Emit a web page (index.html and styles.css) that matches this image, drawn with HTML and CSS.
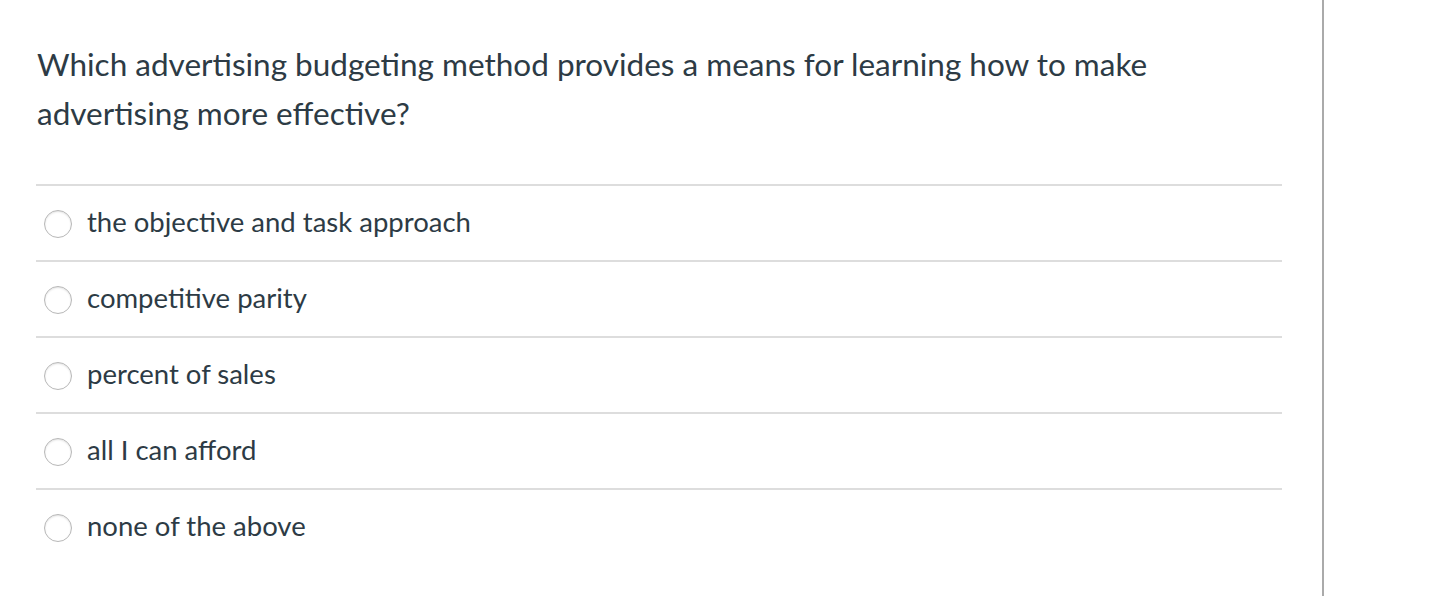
FILE: index.html
```html
<!DOCTYPE html>
<html>
<head>
<meta charset="utf-8">
<link rel="stylesheet" href="styles.css">
</head>
<body>
<div class="page">
  <div class="content">
    <div class="question">Which advertising budgeting method provides a means for learning how to make advertising more effective?</div>
    <div class="answers">
      <div class="answer"><span class="radio"></span><span class="label">the objective and task approach</span></div>
      <div class="answer"><span class="radio"></span><span class="label">competitive parity</span></div>
      <div class="answer"><span class="radio"></span><span class="label">percent of sales</span></div>
      <div class="answer"><span class="radio"></span><span class="label">all I can afford</span></div>
      <div class="answer"><span class="radio"></span><span class="label">none of the above</span></div>
    </div>
  </div>
  <div class="rule"></div>
</div>
</body>
</html>
```
FILE: styles.css
```css
html, body { margin: 0; padding: 0; background: #fff; }
body { font-family: Lato, "Open Sans", sans-serif; color: #2d3b45; }
.page { display: flex; width: 1448px; height: 596px; overflow: hidden; }
.content { width: 1246px; padding: 40px 0 0 36px; }
.rule { width: 2px; background: #aaaaaa; margin-left: 40px; height: 596px; }
.question { font-size: 31.5px; line-height: 49px; padding-left: 1px; margin-bottom: 46px; }
.answers { border-top: 2px solid #dddddd; }
.answer { display: flex; align-items: center; height: 74px; border-bottom: 2px solid #dddddd; padding-left: 8px; }
.answer:last-child { border-bottom: none; }
.radio { width: 26px; height: 26px; border-radius: 50%; border: 1px solid #b8b8b8; box-shadow: inset 0 1px 2px rgba(0,0,0,0.12); background: #fff; flex: none; margin-top: 2px; }
.label { font-size: 27.5px; margin-left: 15px; margin-bottom: 4px; }
```
